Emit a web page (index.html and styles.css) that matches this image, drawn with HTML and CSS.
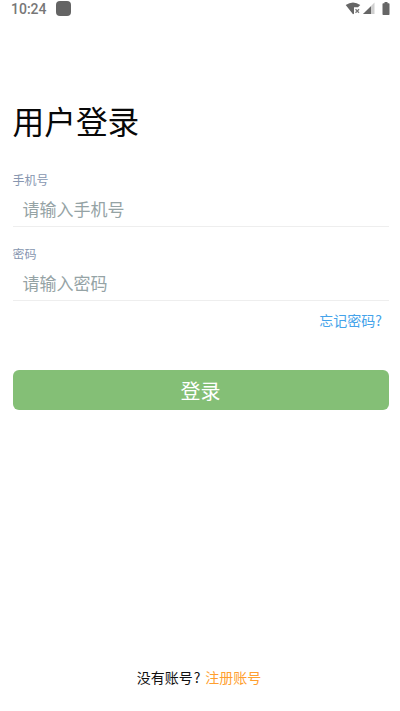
FILE: index.html
```html
<!DOCTYPE html>
<html lang="zh-CN">
<head>
<meta charset="utf-8">
<title>用户登录</title>
<link rel="stylesheet" href="styles.css">
</head>
<body>
<header class="status">
  <div class="status-left"><span class="time">10:24</span><span class="app-dot"></span></div>
  <svg class="status-icons" width="46" height="14" viewBox="0 0 46 14">
    <path d="M0.700 4Q8 -1 15.300 4L13 6.300H9v6.500L8 13.200Z" fill="#666"/>
    <path d="M10.500 8.300l3.500 3.500M14 8.300l-3.500 3.500" stroke="#777" stroke-width="1.300"/>
    <path d="M18 13L29.500 1.500V13Z" fill="#d0d0d0"/>
    <path d="M18 13L26 5.300V13Z" fill="#666"/>
    <path d="M37.500 3q0-.7.700-.7h1.300V1h3v1.300h1.300q.7 0 .7.700v10.300q0 .7-.7.700h-5.600q-.7 0-.7-.7Z" fill="#666"/>
  </svg>
</header>
<main class="login">
  <h1>用户登录</h1>
  <form>
    <label class="field"><span class="label">手机号</span><span class="input">请输入手机号</span></label>
    <label class="field"><span class="label">密码</span><span class="input">请输入密码</span></label>
    <a class="forgot">忘记密码<span class="mark">?</span></a>
    <button class="submit" type="button">登录</button>
  </form>
</main>
<footer class="register"><span>没有账号<span class="mark">?</span></span><a>注册账号</a></footer>
</body>
</html>
```
FILE: styles.css
```css
* { box-sizing: border-box; }
body {
  margin: 0;
  height: 711px;
  display: flex;
  flex-direction: column;
  background: #fff;
  font-family: Roboto, "Noto Sans CJK SC", sans-serif;
  overflow: hidden;
}
.status {
  height: 20px;
  padding: 1px 9px 0 11px;
  display: flex;
  justify-content: space-between;
}
.status-left { display: flex; gap: 9px; }
.time { font-size: 14px; font-weight: 500; line-height: 17px; color: #777; }
.app-dot { width: 15px; height: 15px; border-radius: 4px; background: #646464; }
.login { flex: 1; padding: 84px 11.5px 0 12.5px; }
h1 { margin: 0; font-size: 31.7px; line-height: 40px; font-weight: 400; color: #080808; }
form { display: flex; flex-direction: column; padding-top: 29px; }
.field { display: flex; flex-direction: column; height: 74px; }
.label { font-size: 12px; line-height: 16px; color: #8796b0; }
.input {
  height: 38px;
  padding: 9px 10px 0;
  border-bottom: 1px solid #eee;
  font-size: 17px;
  line-height: 24px;
  color: #95a3a5;
}
.forgot { align-self: flex-end; margin-right: 6.5px; font-size: 14px; line-height: 20px; color: #45a3ea; margin-top: -10px; }
.submit {
  height: 40px;
  margin: 39px 0 0;
  padding: 1px 0 0;
  border: 0;
  border-radius: 6px;
  background: #84bf76;
  color: #fff;
  font: inherit;
  font-size: 20px;
}
.register { display: flex; justify-content: center; gap: 5px; height: 43px; padding-right: 2px; font-size: 14px; line-height: 20px; color: #111; }
.register a { color: #ff9f2f; }
.mark { font-family: "Noto Sans CJK SC", sans-serif; line-height: 1; }
.register .mark { margin-left: 1px; }
```
